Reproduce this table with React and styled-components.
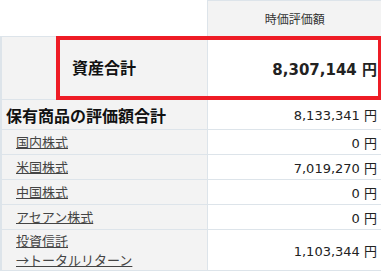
import React from 'react'
import styled, { createGlobalStyle } from 'styled-components'

const GlobalStyle = createGlobalStyle`
    body {
        margin:0;
        background:#fff;
        font-family:"Noto Sans CJK JP", "Noto Sans", sans-serif;
    }
`;

const Wrapper = styled.div`
    position:relative;
    width:381px;
`;

const Table = styled.table`
    width:100%;
    border-collapse:collapse;
    table-layout:fixed;
`;

const Col = styled.col`
    width:${({w})=>w}px;
`;

const HeadBlank = styled.th`
    height:35px;
    padding:0;
    border:none;
`;

const HeadCell = styled.th`
    height:35px;
    padding:0;
    background-color:#f3f3f3;
    border:1px solid #dde4ea;
    border-right:none;
    font-weight:normal;
    font-size:12px;
    color:#333;
    text-align:center;
`;

const Label = styled.td`
    height:${({h})=>h}px;
    padding:0 0 0 ${({indent})=>indent}px;
    background-color:#f3f3f3;
    border:1px solid #dde4ea;
    border-left:2px solid #dde4ea;
    font-size:${({big})=>big ? '16px' : '13px'};
    font-weight:${({big})=>big ? 'bold' : 'normal'};
    color:${({big})=>big ? '#111' : '#444'};
    white-space:nowrap;
    line-height:1.5;
`;

const Value = styled.td`
    height:${({h})=>h}px;
    padding:0 5px 0 0;
    background-color:#fff;
    border:1px solid #dde4ea;
    border-right:none;
    text-align:right;
    font-family:"DejaVu Sans", "Noto Sans CJK JP", sans-serif;
    font-size:${({big})=>big ? '15px' : '13px'};
    font-weight:${({bold})=>bold ? 'bold' : 'normal'};
    color:#222;
    white-space:nowrap;
`;

const Link = styled.a`
    color:#444;
    text-decoration:underline;
    display:block;
`;

const Highlight = styled.div`
    position:absolute;
    left:56px;
    right:-1px;
    top:36px;
    height:64px;
    box-sizing:border-box;
    border:4px solid #ee1c25;
    pointer-events:none;
`;

const TotalLabel = styled.span`
    display:inline-block;
    margin:0 0 3px 68px;
`;

const rows = [
    {name:'国内株式', value:'0 円'},
    {name:'米国株式', value:'7,019,270 円'},
    {name:'中国株式', value:'0 円'},
    {name:'アセアン株式', value:'0 円'},
];

const App = () => (
    <Wrapper>
        <GlobalStyle/>
        <Table>
            <colgroup>
                <Col w={206}/>
                <Col w={175}/>
            </colgroup>
            <thead>
                <tr>
                    <HeadBlank/>
                    <HeadCell>時価評価額</HeadCell>
                </tr>
            </thead>
            <tbody>
                <tr>
                    <Label h={62} indent={2} big><TotalLabel>資産合計</TotalLabel></Label>
                    <Value h={62} big bold>8,307,144 円</Value>
                </tr>
                <tr>
                    <Label h={29} indent={4} big>保有商品の評価額合計</Label>
                    <Value h={29}>8,133,341 円</Value>
                </tr>
                {rows.map(r => (
                    <tr key={r.name}>
                        <Label h={24} indent={14}><Link href="#">{r.name}</Link></Label>
                        <Value h={24}>{r.value}</Value>
                    </tr>
                ))}
                <tr>
                    <Label h={40} indent={14}>
                        <Link href="#">投資信託</Link>
                        <Link href="#">→トータルリターン</Link>
                    </Label>
                    <Value h={40}>1,103,344 円</Value>
                </tr>
            </tbody>
        </Table>
        <Highlight/>
    </Wrapper>
)

export default App;
